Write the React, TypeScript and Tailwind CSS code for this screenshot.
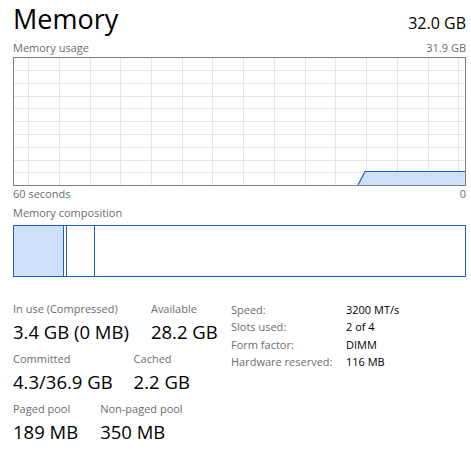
import React from "react";

const vLines = [14, 45, 76, 106, 137, 168, 198, 229, 260, 291, 321, 352, 383, 414, 444];
const hLines = [12, 25, 38, 50, 63, 76, 89, 102, 114];

function Label({ children }: { children: React.ReactNode }) {
  return <div className="h-[16px] leading-[16px] text-[11px] text-[#6d6d6d] whitespace-nowrap">{children}</div>;
}
function Value({ children }: { children: React.ReactNode }) {
  return <div className="mt-[3px] h-[24px] leading-[24px] text-[18.5px] text-black whitespace-nowrap">{children}</div>;
}
function Stat({ label, value }: { label: string; value: string }) {
  return (
    <div className="flex flex-col">
      <Label>{label}</Label>
      <Value>{value}</Value>
    </div>
  );
}

export default function App() {
  const props: [string, string][] = [
    ["Speed:", "3200 MT/s"],
    ["Slots used:", "2 of 4"],
    ["Form factor:", "DIMM"],
    ["Hardware reserved:", "116 MB"],
  ];
  return (
    <div
      className="w-[471px] h-[457px] bg-white pl-[13px] pr-[5px] pt-[1px] overflow-hidden"
      style={{ fontFamily: '"Open Sans", "Noto Sans", sans-serif' }}
    >
      <div className="flex justify-between items-start h-[36px]">
        <div className="text-[27px] leading-[36px] text-black">Memory</div>
        <div className="mt-[12px] text-[16px] leading-[20px] text-black">32.0 GB</div>
      </div>
      <div className="mt-[3px] flex justify-between h-[16px] leading-[16px] text-[11px] text-[#6d6d6d]">
        <span>Memory usage</span>
        <span>31.9 GB</span>
      </div>
      <div className="mt-[1px] h-[129px] border border-[#808080]">
        <svg width="451" height="127" className="block">
          {vLines.map((x) => (
            <line key={"v" + x} x1={x + 0.5} y1={0} x2={x + 0.5} y2={127} stroke="#e6e6e6" strokeWidth={1} />
          ))}
          {hLines.map((y) => (
            <line key={"h" + y} x1={0} y1={y + 0.5} x2={451} y2={y + 0.5} stroke="#e6e6e6" strokeWidth={1} />
          ))}
          <polygon points="344,127 351,113.5 451,113.5 451,127" fill="#cce0fa" />
          <polyline points="344,127 351,113.5 451,113.5" fill="none" stroke="#1a5fd0" strokeWidth={1.2} />
        </svg>
      </div>
      <div className="flex justify-between h-[16px] leading-[16px] text-[11px] text-[#6d6d6d]">
        <span>60 seconds</span>
        <span>0</span>
      </div>
      <div className="mt-[3px] h-[16px] leading-[16px] text-[11px] text-[#6d6d6d]">Memory composition</div>
      <div className="mt-[4px] h-[52px] border border-[#1a5fd0] flex">
        <div className="w-[50px] bg-[#cce0fa] border-r border-[#1a5fd0]" />
        <div className="w-[3px] border-r border-[#1a5fd0]" />
        <div className="w-[28px] border-r border-[#1a5fd0]" />
        <div className="flex-1" />
      </div>
      <div className="mt-[24px] flex">
        <div className="w-[218px] flex flex-col gap-[7px]">
          <div className="flex gap-[22px]">
            <Stat label="In use (Compressed)" value="3.4 GB (0 MB)" />
            <Stat label="Available" value="28.2 GB" />
          </div>
          <div className="flex gap-[21px]">
            <Stat label="Committed" value="4.3/36.9 GB" />
            <Stat label="Cached" value="2.2 GB" />
          </div>
          <div className="flex gap-[22px]">
            <Stat label="Paged pool" value="189 MB" />
            <Stat label="Non-paged pool" value="350 MB" />
          </div>
        </div>
        <div className="flex flex-col">
          {props.map(([k, v]) => (
            <div key={k} className="flex h-[17.33px] leading-[17.33px] text-[11px] whitespace-nowrap">
              <span className="w-[115px] text-[#6d6d6d]">{k}</span>
              <span className="text-black">{v}</span>
            </div>
          ))}
        </div>
      </div>
    </div>
  );
}
